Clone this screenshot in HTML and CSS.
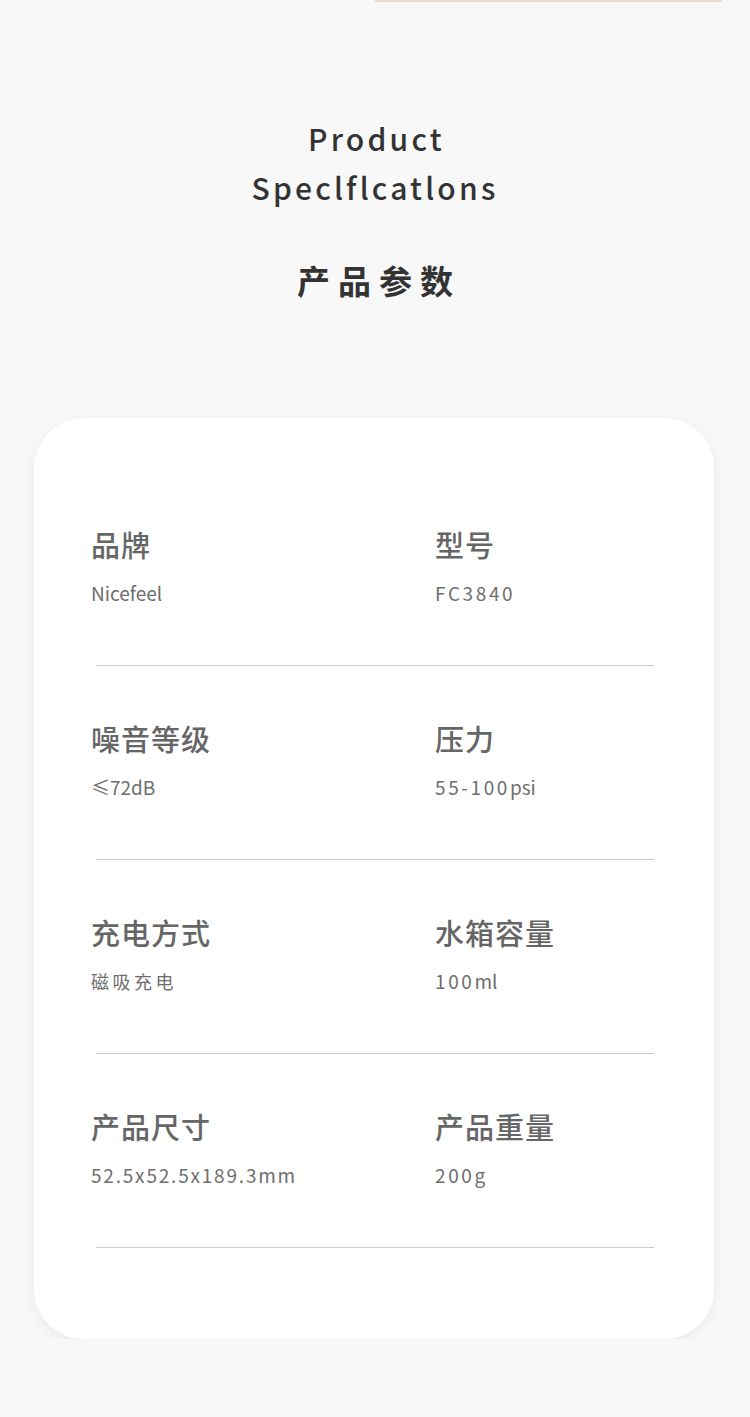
FILE: index.html
```html
<!DOCTYPE html>
<html lang="zh-CN">
<head>
    <meta charset="UTF-8">
    <meta name="viewport" content="width=device-width, initial-scale=1.0">
    <title>产品参数</title>
    <link rel="stylesheet" href="styles.css">
</head>
<body>
    <div class="top-edge"></div>

    <header class="heading">
        <div class="heading-en">Product<br>Speclflcatlons</div>
        <h1 class="heading-cn">产品参数</h1>
    </header>

    <!-- 参数卡片 -->
    <div class="spec-card">
        <div class="spec-row">
            <div class="spec-grid">
                <div class="spec-item">
                    <div class="spec-label">品牌</div>
                    <div class="spec-value">Nicefeel</div>
                </div>
                <div class="spec-item">
                    <div class="spec-label">型号</div>
                    <div class="spec-value wide">FC3840</div>
                </div>
            </div>
        </div>
        <div class="spec-row">
            <div class="spec-grid">
                <div class="spec-item">
                    <div class="spec-label">噪音等级</div>
                    <div class="spec-value">≤72dB</div>
                </div>
                <div class="spec-item">
                    <div class="spec-label">压力</div>
                    <div class="spec-value"><span class="wide">55-100</span>psi</div>
                </div>
            </div>
        </div>
        <div class="spec-row">
            <div class="spec-grid">
                <div class="spec-item">
                    <div class="spec-label">充电方式</div>
                    <div class="spec-value cn">磁吸充电</div>
                </div>
                <div class="spec-item">
                    <div class="spec-label">水箱容量</div>
                    <div class="spec-value"><span class="wide">100</span>ml</div>
                </div>
            </div>
        </div>
        <div class="spec-row">
            <div class="spec-grid">
                <div class="spec-item">
                    <div class="spec-label">产品尺寸</div>
                    <div class="spec-value size">52.5x52.5x189.3mm</div>
                </div>
                <div class="spec-item">
                    <div class="spec-label">产品重量</div>
                    <div class="spec-value wide">200g</div>
                </div>
            </div>
        </div>
    </div>
</body>
</html>
```

FILE: styles.css
```css
body {
    font-family: "Noto Sans CJK SC", "Noto Sans", sans-serif;
    background-color: #f8f8f8;
    color: #333;
    margin: 0;
    padding: 0;
}

.top-edge {
    margin-left: 375px;
    width: 347px;
    height: 2px;
    background-color: #e9dccf;
}

.heading {
    text-align: center;
    padding-top: 112px;
}

.heading-en {
    font-size: 30px;
    line-height: 49px;
    letter-spacing: 3.2px;
    text-indent: 3px;
    font-weight: 500;
    color: #333;
}

.heading-cn {
    margin: 45px 0 0;
    font-size: 33px;
    line-height: 46px;
    letter-spacing: 8px;
    text-indent: 8px;
    font-weight: 700;
    color: #333;
}

.spec-card {
    margin: 115px 36px 0 34px;
    height: 921px;
    box-sizing: border-box;
    padding-top: 54px;
    background: #ffffff;
    border-radius: 50px;
    box-shadow: 0 4px 14px rgba(0, 0, 0, 0.06);
}

.spec-row {
    margin: 0 60px 0 62px;
    padding: 52px 0 57px;
    border-bottom: 1px solid #cccccc;
}

.spec-grid {
    display: grid;
    grid-template-columns: 344px 1fr;
    margin-left: -5px;
}

.spec-label {
    font-size: 29px;
    line-height: 40px;
    letter-spacing: 1px;
    font-weight: 500;
    color: #666;
}

.spec-value {
    margin-top: 14px;
    font-size: 19px;
    line-height: 30px;
    font-weight: 400;
    color: #6e6e6e;
}

.spec-value.cn {
    font-size: 18px;
    letter-spacing: 3.5px;
}

.spec-value.size {
    letter-spacing: 1.8px;
}

.wide {
    letter-spacing: 2.6px;
}
```
